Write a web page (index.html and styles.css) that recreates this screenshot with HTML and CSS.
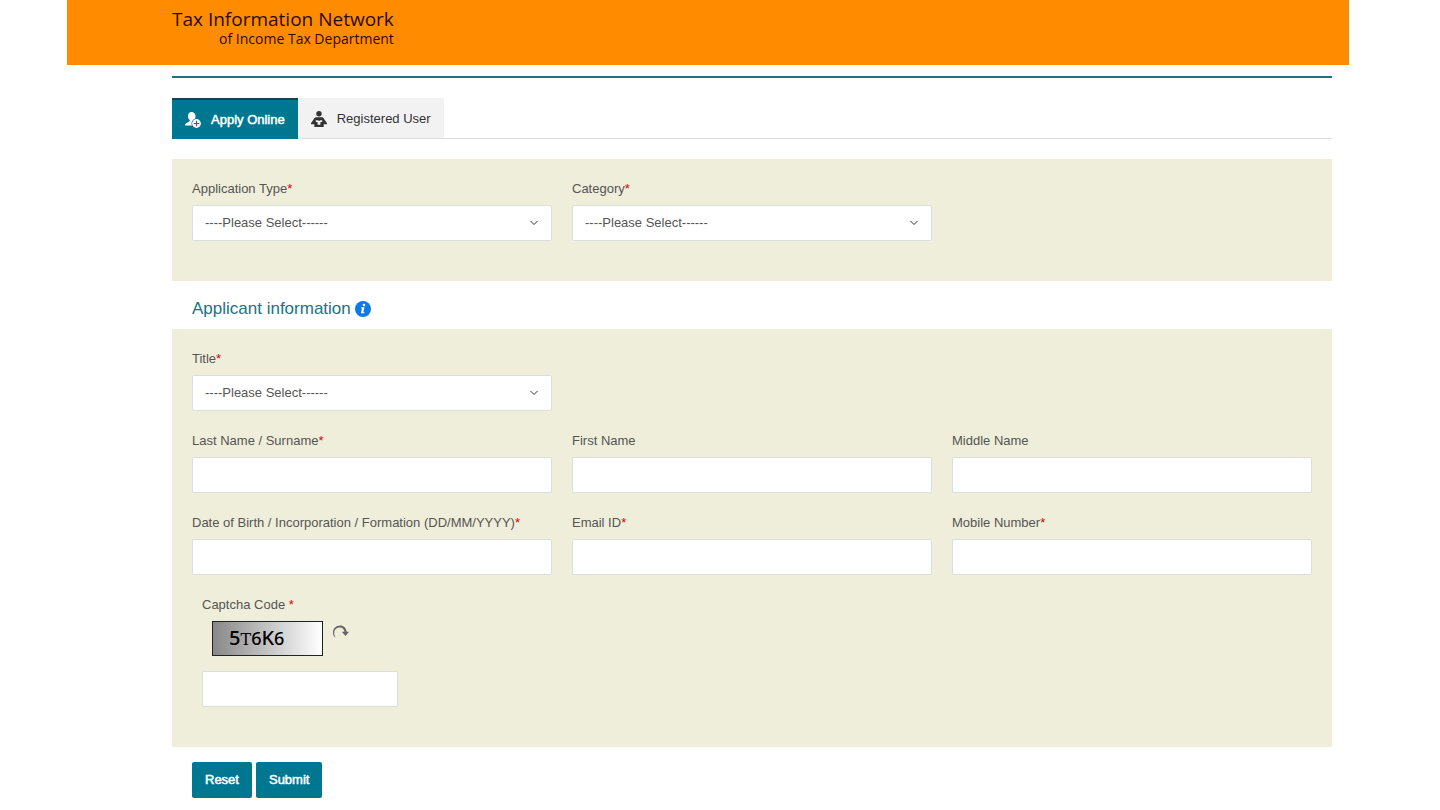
FILE: index.html
```html
<!DOCTYPE html>
<html lang="en">
<head>
    <meta charset="UTF-8">
    <meta name="viewport" content="width=device-width, initial-scale=1.0">
    <title>Tax Information Network</title>
    <link rel="stylesheet" href="styles.css">
</head>
<body>
    <header class="header">
        <div class="brand">
            <div class="brand-name">Tax Information Network</div>
            <div class="brand-sub">of Income Tax Department</div>
        </div>
    </header>

    <main class="container">
        <nav class="tabs">
            <a href="#apply" class="tab active">
                <svg width="16" height="16" viewBox="0 0 16 16" aria-hidden="true">
                    <path fill="#fff" d="M6.500 0C4.200 0 3 1.700 3 4c0 1.800.7 3.200 1.700 4.100v1.200L1.500 11C.5 11.600 0 12.300 0 13.500h7L10 7c.3-.8.500-1.800.500-3C10.500 1.700 9 0 6.500 0z"/>
                    <circle cx="11.500" cy="11.500" r="5" fill="#007791"/>
                    <circle cx="11.500" cy="11.500" r="4.400" fill="#fff"/>
                    <path stroke="#007791" stroke-width="1.200" d="M11.500 8.700v5.600M8.700 11.500h5.600"/>
                </svg>
                Apply Online
            </a>
            <a href="#registered" class="tab">
                <svg width="16" height="16" viewBox="0 0 16 16" aria-hidden="true">
                    <circle cx="8" cy="2.700" r="2.700" fill="#333"/>
                    <path fill="#333" d="M5.500 6.300h5c1.200 0 2 .6 2.600 1.600L16 12.200v1h-3.300V16H3.300v-2.800H0v-1l2.900-4.300c.6-1 1.400-1.600 2.600-1.600z"/>
                    <path fill="#f2f2f2" d="M4.800 9.200h2c.3.700 2.100.7 2.400 0h2v1.700H9.400v2.900H6.600v-2.900H4.800z"/>
                </svg>
                Registered User
            </a>
        </nav>

        <form id="panForm">
            <section class="panel">
                <div class="field">
                    <label for="appType">Application Type<span class="req">*</span></label>
                    <div class="select-box">
                        <select id="appType" name="appType">
                            <option>----Please Select------</option>
                        </select>
                        <svg class="chevron" width="8" height="6" viewBox="0 0 8 6" aria-hidden="true"><path d="M.5 1 4 4.500 7.500 1"/></svg>
                    </div>
                </div>
                <div class="field">
                    <label for="category">Category<span class="req">*</span></label>
                    <div class="select-box">
                        <select id="category" name="category">
                            <option>----Please Select------</option>
                        </select>
                        <svg class="chevron" width="8" height="6" viewBox="0 0 8 6" aria-hidden="true"><path d="M.5 1 4 4.500 7.500 1"/></svg>
                    </div>
                </div>
            </section>

            <h2>
                Applicant information
                <svg width="16" height="16" viewBox="0 0 16 16" aria-hidden="true">
                    <circle cx="8" cy="8" r="8" fill="#0b7be8"/>
                    <circle cx="9" cy="4" r="1.300" fill="#fff"/>
                    <path fill="#fff" d="M6.200 6.200h3.300l-1.200 5.100h1.200l-.2 1H5.900l1.100-5H5.900z"/>
                </svg>
            </h2>

            <section class="panel">
                <div class="field first">
                    <label for="title">Title<span class="req">*</span></label>
                    <div class="select-box">
                        <select id="title" name="title">
                            <option>----Please Select------</option>
                        </select>
                        <svg class="chevron" width="8" height="6" viewBox="0 0 8 6" aria-hidden="true"><path d="M.5 1 4 4.500 7.500 1"/></svg>
                    </div>
                </div>
                <div class="field first">
                    <label for="lastName">Last Name / Surname<span class="req">*</span></label>
                    <input type="text" id="lastName" name="lastName">
                </div>
                <div class="field">
                    <label for="firstName">First Name</label>
                    <input type="text" id="firstName" name="firstName">
                </div>
                <div class="field">
                    <label for="middleName">Middle Name</label>
                    <input type="text" id="middleName" name="middleName">
                </div>
                <div class="field">
                    <label for="dob">Date of Birth / Incorporation / Formation (DD/MM/YYYY)<span class="req">*</span></label>
                    <input type="text" id="dob" name="dob">
                </div>
                <div class="field">
                    <label for="email">Email ID<span class="req">*</span></label>
                    <input type="email" id="email" name="email">
                </div>
                <div class="field">
                    <label for="mobile">Mobile Number<span class="req">*</span></label>
                    <input type="tel" id="mobile" name="mobile">
                </div>
                <div class="field first captcha">
                    <label for="captcha">Captcha Code <span class="req">*</span></label>
                    <div class="captcha-row">
                        <div class="captcha-code"><span class="sans">5</span><span class="slab">T</span><span class="mid">6</span><span class="sans">K</span><span class="mid">6</span></div>
                        <button type="button" class="refresh" aria-label="Refresh captcha">
                            <svg width="17" height="14" viewBox="0 0 17 14" aria-hidden="true">
                                <path fill="#666" d="M2.800 13C.6 11.500 0 9.500 0 7.500 0 3.500 3 .5 7 .5c3.800 0 6.300 2.500 6.700 6.300H16L12.500 11 8.800 6.800h2.700C11 4 9.500 2.400 7 2.400 3.700 2.400 1.200 4.600 1.200 7.800c0 1.800.5 3.500 1.600 5.200z"/>
                            </svg>
                        </button>
                    </div>
                    <input type="text" id="captcha" name="captcha">
                </div>
            </section>

            <div class="actions">
                <button type="reset" class="btn">Reset</button>
                <button type="submit" class="btn">Submit</button>
            </div>
        </form>
    </main>
</body>
</html>
```

FILE: styles.css
```css
* {
    box-sizing: border-box;
}

body {
    margin: 0;
    background-color: #fff;
    color: #555;
    font-family: "Liberation Sans", Arial, sans-serif;
    font-size: 13px;
    line-height: 20px;
}

.header {
    display: flex;
    height: 65px;
    margin: 0 91px 0 67px;
    padding: 7px 105px;
    background-color: #ff8c00;
}

.brand {
    color: #2a0a0a;
    font-family: "Open Sans", "Noto Sans", sans-serif;
    text-align: right;
}

.brand-name {
    font-size: 19px;
    line-height: 24px;
}

.brand-sub {
    font-size: 14px;
    line-height: 16px;
}

.container {
    margin: 11px 108px 0 172px;
    padding-top: 20px;
    border-top: 2px solid #1b7383;
}

.tabs {
    display: flex;
    border-bottom: 1px solid #ddd;
}

.tab {
    display: flex;
    align-items: center;
    gap: 10px;
    height: 40px;
    padding: 2px 13px 0;
    background-color: #f2f2f2;
    color: #333;
    text-decoration: none;
}

.tab.active {
    height: 41px;
    margin-bottom: -1px;
    padding-top: 0;
    border-top: 2px solid #1f3f4a;
    background-color: #007791;
    color: #fff;
    -webkit-text-stroke: 0.5px #fff;
}

.panel {
    display: grid;
    grid-template-columns: repeat(3, 1fr);
    gap: 20px;
    padding: 20px 20px 40px;
    background-color: #efeeda;
}

.tabs + form {
    margin-top: 20px;
}

.field {
    display: flex;
    flex-direction: column;
    gap: 6px;
}

.first {
    grid-column-start: 1;
}

.req {
    color: #d00;
}

input,
select {
    width: 100%;
    height: 36px;
    padding: 0 12px;
    border: 1px solid #ddd;
    border-radius: 2px;
    background-color: #fff;
    color: #555;
    font: inherit;
}

select {
    appearance: none;
    display: block;
}

.select-box {
    position: relative;
}

.chevron {
    position: absolute;
    top: 15px;
    right: 14px;
    fill: none;
    stroke: #333;
    pointer-events: none;
}

h2 {
    display: flex;
    align-items: center;
    gap: 4px;
    height: 48px;
    margin: 0;
    padding: 8px 20px 0;
    color: #1b7383;
    font-size: 17px;
    font-weight: normal;
}

.captcha {
    padding-left: 10px;
}

.captcha-row {
    display: flex;
    align-items: flex-start;
    gap: 10px;
    margin-bottom: 9px;
    padding-left: 10px;
}

.captcha-code {
    display: flex;
    align-items: baseline;
    width: 111px;
    height: 35px;
    padding: 0 16px;
    border: 1px solid #222;
    background: linear-gradient(to right, #888, #fff);
    color: #000;
    font-family: "Noto Sans", sans-serif;
    font-size: 20px;
    line-height: 31px;
}

.sans {
    font-weight: 500;
}

.slab {
    font-family: "DejaVu Serif", serif;
    font-size: 16px;
}

.mid {
    font-size: 18px;
    font-weight: 500;
}

.refresh {
    display: flex;
    padding: 4px 0;
    border: none;
    background: none;
    cursor: pointer;
}

.captcha input {
    width: 196px;
}

.actions {
    display: flex;
    gap: 4px;
    padding: 15px 20px 12px;
}

.btn {
    height: 36px;
    padding: 0 13px;
    border: none;
    border-radius: 2px;
    background-color: #007791;
    color: #fff;
    font: inherit;
    -webkit-text-stroke: 0.5px #fff;
    cursor: pointer;
}

.btn:hover {
    background-color: #00657b;
}

@media screen and (max-width: 900px) {
    .header,
    .container {
        margin-left: 16px;
        margin-right: 16px;
    }

    .header {
        padding-left: 16px;
    }

    .panel {
        grid-template-columns: 1fr;
    }
}
```
